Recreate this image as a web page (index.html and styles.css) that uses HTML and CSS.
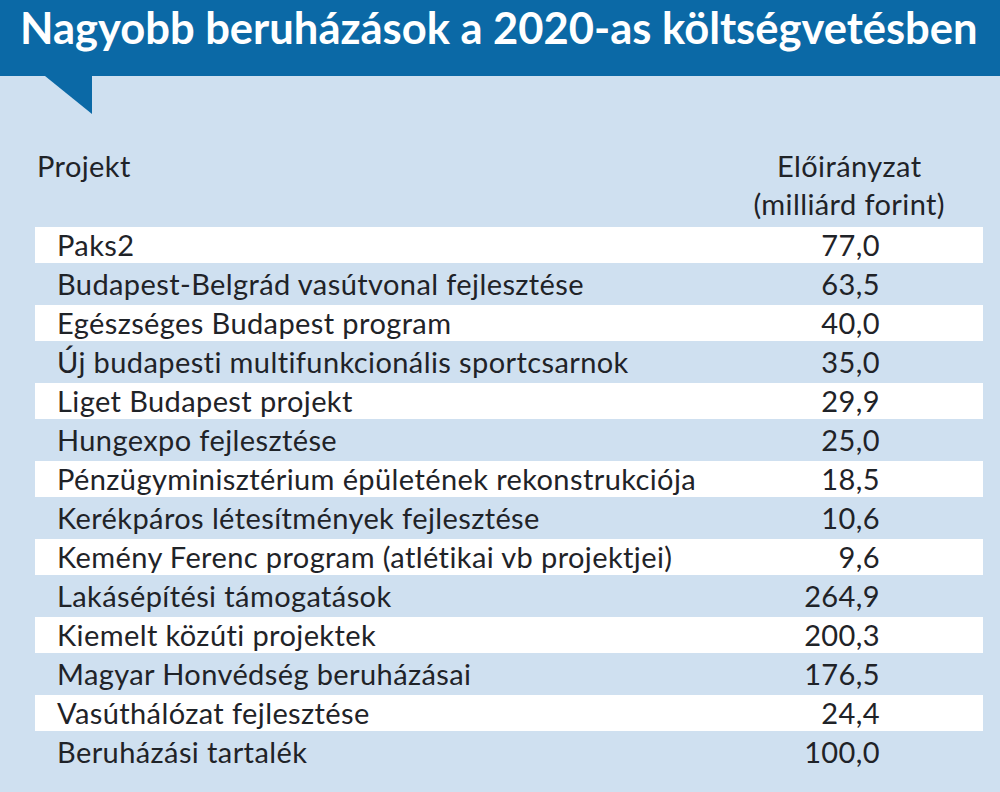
FILE: index.html
```html
<!DOCTYPE html>
<html lang="hu">
<head>
<meta charset="utf-8">
<title>Nagyobb beruházások a 2020-as költségvetésben</title>
<link rel="stylesheet" href="styles.css">
</head>
<body>
<header class="title-bar">
  <h1 class="title">Nagyobb beruházások a 2020-as költségvetésben</h1>
</header>
<div class="tail"></div>
<section class="table">
  <div class="thead">
    <div class="th-name">Projekt</div>
    <div class="th-val">Előirányzat<br>(milliárd forint)</div>
  </div>
  <div class="rows">
    <div class="row"><span>Paks2</span><span>77,0</span></div>
    <div class="row"><span>Budapest-Belgrád vasútvonal fejlesztése</span><span>63,5</span></div>
    <div class="row"><span>Egészséges Budapest program</span><span>40,0</span></div>
    <div class="row"><span>Új budapesti multifunkcionális sportcsarnok</span><span>35,0</span></div>
    <div class="row"><span>Liget Budapest projekt</span><span>29,9</span></div>
    <div class="row"><span>Hungexpo fejlesztése</span><span>25,0</span></div>
    <div class="row"><span>Pénzügyminisztérium épületének rekonstrukciója</span><span>18,5</span></div>
    <div class="row"><span>Kerékpáros létesítmények fejlesztése</span><span>10,6</span></div>
    <div class="row"><span>Kemény Ferenc program (atlétikai vb projektjei)</span><span>9,6</span></div>
    <div class="row"><span>Lakásépítési támogatások</span><span>264,9</span></div>
    <div class="row"><span>Kiemelt közúti projektek</span><span>200,3</span></div>
    <div class="row"><span>Magyar Honvédség beruházásai</span><span>176,5</span></div>
    <div class="row"><span>Vasúthálózat fejlesztése</span><span>24,4</span></div>
    <div class="row"><span>Beruházási tartalék</span><span>100,0</span></div>
  </div>
</section>
</body>
</html>
```
FILE: styles.css
```css
html, body {
  margin: 0;
  padding: 0;
}
body {
  background: #cfe0f0;
  font-family: Lato, "Open Sans", sans-serif;
  color: #1f2328;
  width: 1000px;
  height: 792px;
  overflow: hidden;
}
.title-bar {
  background: #0b69a6;
  height: 76px;
  box-sizing: border-box;
  padding: 2px 0 0 20px;
}
.title {
  margin: 0;
  font-size: 43.5px;
  line-height: 50px;
  font-weight: 700;
  color: #ffffff;
  white-space: nowrap;
}
.tail {
  margin-left: 45px;
  width: 47px;
  height: 38px;
  background: #0b69a6;
  clip-path: polygon(0 0, 100% 0, 100% 100%);
}
.thead {
  display: flex;
  justify-content: space-between;
  align-items: flex-start;
  padding: 33px 55px 0 37px;
  margin-bottom: 4px;
  font-size: 29px;
  letter-spacing: 0.4px;
  line-height: 38px;
}
.th-val {
  text-align: center;
}
.rows {
  display: flex;
  flex-direction: column;
  gap: 3px;
  margin: 0 17px 0 35px;
}
.row {
  display: flex;
  justify-content: space-between;
  align-items: center;
  height: 36px;
  padding: 0 103px 0 22px;
  font-size: 29px;
  letter-spacing: 0.4px;
  line-height: 36px;
}
.row:nth-child(odd) {
  background: #ffffff;
}
```
